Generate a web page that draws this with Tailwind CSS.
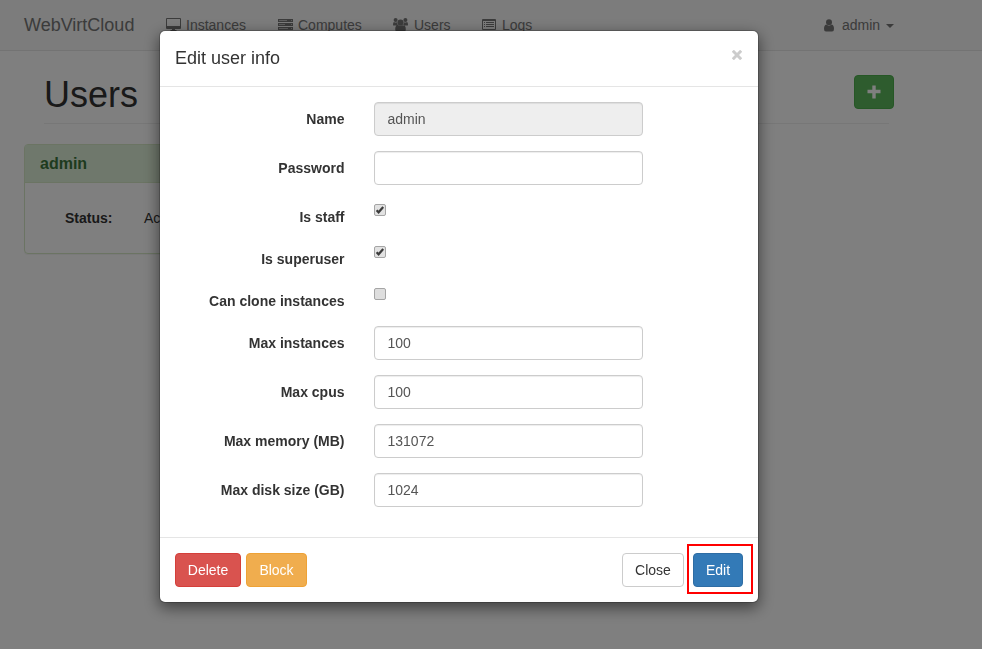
<!DOCTYPE html>
<html lang="en">
<head>
<meta charset="utf-8">
<title>WebVirtCloud - Users</title>
<script src="https://cdn.jsdelivr.net/npm/@tailwindcss/browser@4"></script>
</head>
<body class="h-[649px] overflow-hidden bg-white font-['Liberation_Sans',Arial,sans-serif] text-sm leading-5 text-[#333]">
<nav class="flex h-[51px] items-center border-b border-[#e7e7e7] bg-[#f8f8f8] pl-6 text-[#777]">
  <a class="w-[142px] text-lg leading-5">WebVirtCloud</a>
  <a class="flex w-28 items-center gap-[5px]">
    <svg class="mb-px h-[15px] w-[15px]" viewBox="0 0 15 15" fill="currentColor"><path fill-rule="evenodd" d="M1 1h13q1 0 1 1v9q0 1-1 1H1q-1 0-1-1V2q0-1 1-1Zm0 1v7h13V2Z"/><path d="M6 12h3v1h1.500v1h-6v-1H6Z"/></svg>
    <span>Instances</span>
  </a>
  <a class="flex w-[115px] items-center gap-[5px]">
    <svg class="mb-px h-[15px] w-[15px]" viewBox="0 0 15 15" fill="currentColor"><path d="M0 2h15v3H0ZM0 6h15v3H0ZM0 10h15v3H0Z"/><path d="M1 3.500h8m4 0h1M1 7.500h6m6 0h1M1 11.500h9m3 0h1" stroke="#d0d0d0" stroke-width=".8"/></svg>
    <span>Computes</span>
  </a>
  <a class="flex w-[89px] items-center gap-[6px]">
    <svg class="mb-px h-[15px] w-[15px]" viewBox="0 0 15 15" fill="currentColor"><circle cx="2.600" cy="3" r="2"/><circle cx="12.400" cy="3" r="2"/><circle cx="7.500" cy="5.500" r="3.100"/><path d="M0 8Q0 5 1 5q1.500 1 3 .3Q4.200 7.200 5.200 8.500H.7Q0 8.500 0 8ZM15 8q0-3-1-3-1.500 1-3 .3Q10.800 7.200 9.800 8.500h4.500Q15 8.500 15 8ZM2.200 12.500q0-4.500 2.600-4.500 2.700 1.200 5.400 0 2.600 0 2.600 4.500 0 2.500-2 2.500H4.200q-2 0-2-2.500Z"/></svg>
    <span>Users</span>
  </a>
  <a class="flex w-[342px] items-center gap-[5px]">
    <svg class="mb-px h-[15px] w-[15px]" viewBox="0 0 15 15" fill="currentColor"><path fill-rule="evenodd" d="M1 2h12q1 0 1 1v9q0 1-1 1H1q-1 0-1-1V3q0-1 1-1Zm0 2v8h12V4Z"/><path d="M2 5h1v1H2Zm2 0h8v1H4ZM2 7h1v1H2Zm2 0h8v1H4ZM2 9h1v1H2Zm2 0h8v1H4Z"/></svg>
    <span>Logs</span>
  </a>
  <a class="flex items-center">
    <svg class="mr-2 h-[13px] w-[10px]" viewBox="0 0 10 13" fill="currentColor"><circle cx="5" cy="3.300" r="3"/><path d="M2.200 5.500q2.800 2.300 5.600 0Q10 6 10 10q0 2.500-2 2.500H2Q0 12.500 0 10 0 6 2.200 5.500Z"/></svg>
    <span>admin</span>
    <span class="mt-px ml-1.5 border-x-4 border-t-4 border-x-transparent border-t-current"></span>
  </a>
</nav>

<main>
  <header class="ml-11 flex h-[72px] w-[850px] items-start justify-between pt-6">
    <h1 class="text-4xl leading-[40px] font-medium">Users</h1>
    <button class="flex h-[34px] w-10 items-center justify-center rounded border border-[#4cae4c] bg-[#5cb85c] text-white">
      <svg class="mr-px h-[14px] w-[14px]" viewBox="0 0 14 14" fill="currentColor"><path d="M5.300.5h3.400v4.300h4.800v3.400H8.700v5.300H5.300V8.200H.500V4.800h4.800Z"/></svg>
    </button>
  </header>
  <hr class="ml-11 w-[845px] border-[#eee]">
  <section class="mt-5 ml-6 h-[110px] w-[285px] rounded border border-[#d6e9c6] shadow-[0_1px_1px_rgba(0,0,0,0.05)]">
    <h3 class="h-[38px] border-b border-[#d6e9c6] bg-[#dff0d8] px-[15px] pt-[9px] text-base leading-[19px] font-bold text-[#3c763d]">admin</h3>
    <div class="flex pt-[25px] pl-10"><b class="w-[79px]">Status:</b><span>Active</span></div>
  </section>
</main>

<div class="fixed inset-0 flex items-start bg-black/50 pt-[30px] pl-[159px]">
  <div class="h-[573px] w-[600px] rounded-md border border-black/20 bg-white bg-clip-padding shadow-[0_5px_15px_rgba(0,0,0,0.5)]">
    <header class="flex h-14 items-start justify-between border-b border-[#e5e5e5] px-[15px] pt-3.5">
      <h4 class="text-lg leading-[26px]">Edit user info</h4>
      <button class="mt-[5px] mr-px p-0 text-[#ccc]"><svg class="h-[10px] w-[10px]" viewBox="0 0 10 10" fill="none" stroke="currentColor" stroke-width="3"><path d="m.8.8 8.400 8.400m0-8.400L.8 9.200"/></svg></button>
    </header>
    <form class="flex h-[450px] flex-col gap-[15px] pt-[15px]">
      <label class="flex h-[34px] items-center"><b class="mr-[29.500px] w-[184.500px] text-right">Name</b><input class="h-[34px] w-[269px] rounded border border-[#ccc] bg-[#eee] px-[12.500px] text-[#555] shadow-[inset_0_1px_1px_rgba(0,0,0,0.075)]" value="admin" disabled></label>
      <label class="flex h-[34px] items-center"><b class="mr-[29.500px] w-[184.500px] text-right">Password</b><input type="password" class="h-[34px] w-[269px] rounded border border-[#ccc] px-[12.500px] text-[#555] shadow-[inset_0_1px_1px_rgba(0,0,0,0.075)]"></label>
      <label class="flex h-[27px] items-start"><b class="mr-[29.500px] w-[184.500px] pt-[7px] text-right">Is staff</b>
        <svg class="mt-1 h-3 w-3" viewBox="0 0 12 12"><rect x=".5" y=".5" width="11" height="11" rx="1.500" fill="#e2e2e2" stroke="#a5a5a5"/><path d="M2.600 6.200 4.600 8.300 9.200 3" fill="none" stroke="#3b3b3b" stroke-width="2.200"/></svg></label>
      <label class="flex h-[27px] items-start"><b class="mr-[29.500px] w-[184.500px] pt-[7px] text-right">Is superuser</b>
        <svg class="mt-1 h-3 w-3" viewBox="0 0 12 12"><rect x=".5" y=".5" width="11" height="11" rx="1.500" fill="#e2e2e2" stroke="#a5a5a5"/><path d="M2.600 6.200 4.600 8.300 9.200 3" fill="none" stroke="#3b3b3b" stroke-width="2.200"/></svg></label>
      <label class="flex h-[27px] items-start"><b class="mr-[29.500px] w-[184.500px] pt-[7px] text-right">Can clone instances</b>
        <svg class="mt-1 h-3 w-3" viewBox="0 0 12 12"><rect x=".5" y=".5" width="11" height="11" rx="1.500" fill="#dedede" stroke="#a5a5a5"/></svg></label>
      <label class="flex h-[34px] items-center"><b class="mr-[29.500px] w-[184.500px] text-right">Max instances</b><input class="h-[34px] w-[269px] rounded border border-[#ccc] px-[12.500px] text-[#555] shadow-[inset_0_1px_1px_rgba(0,0,0,0.075)]" value="100"></label>
      <label class="flex h-[34px] items-center"><b class="mr-[29.500px] w-[184.500px] text-right">Max cpus</b><input class="h-[34px] w-[269px] rounded border border-[#ccc] px-[12.500px] text-[#555] shadow-[inset_0_1px_1px_rgba(0,0,0,0.075)]" value="100"></label>
      <label class="flex h-[34px] items-center"><b class="mr-[29.500px] w-[184.500px] text-right">Max memory (MB)</b><input class="h-[34px] w-[269px] rounded border border-[#ccc] px-[12.500px] text-[#555] shadow-[inset_0_1px_1px_rgba(0,0,0,0.075)]" value="131072"></label>
      <label class="flex h-[34px] items-center"><b class="mr-[29.500px] w-[184.500px] text-right">Max disk size (GB)</b><input class="h-[34px] w-[269px] rounded border border-[#ccc] px-[12.500px] text-[#555] shadow-[inset_0_1px_1px_rgba(0,0,0,0.075)]" value="1024"></label>
    </form>
    <footer class="flex items-start border-t border-[#e5e5e5] px-[15px] pt-[15px]">
      <button class="mr-[5px] h-[34px] w-[66px] rounded border border-[#d43f3a] bg-[#d9534f] text-white">Delete</button>
      <button class="h-[34px] w-[61px] rounded border border-[#eea236] bg-[#f0ad4e] text-white">Block</button>
      <button class="mr-[9px] ml-auto h-[34px] w-[62px] rounded border border-[#ccc] bg-white">Close</button>
      <div class="relative">
        <button class="h-[34px] w-[50px] rounded border border-[#2e6da4] bg-[#337ab7] text-white">Edit</button>
        <span class="absolute -top-[9px] -left-[6px] h-[50px] w-[66px] border-2 border-[#f00]"></span>
      </div>
    </footer>
  </div>
</div>
</body>
</html>
